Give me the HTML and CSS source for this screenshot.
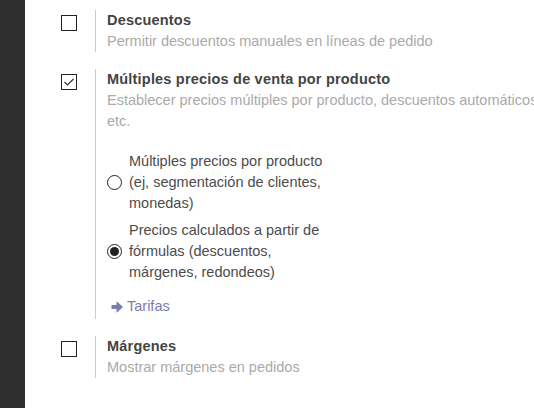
FILE: index.html
```html
<!DOCTYPE html>
<html lang="es">
<head>
<meta charset="utf-8">
<link rel="stylesheet" href="styles.css">
</head>
<body>
<div class="app">
  <aside class="sidebar"></aside>
  <main class="settings">
    <section class="setting">
      <div class="setting-check"><span class="checkbox"></span></div>
      <div class="setting-body">
        <div class="setting-title">Descuentos</div>
        <div class="setting-desc">Permitir descuentos manuales en líneas de pedido</div>
      </div>
    </section>

    <section class="setting">
      <div class="setting-check">
        <span class="checkbox checked">
          <svg width="12" height="10" viewBox="0 0 12 10"><path d="M1.5 5 L4.5 8 L10.5 2" fill="none" stroke="#333" stroke-width="1.2"/></svg>
        </span>
      </div>
      <div class="setting-body">
        <div class="setting-title">Múltiples precios de venta por producto</div>
        <div class="setting-desc wide">Establecer precios múltiples por producto, descuentos automáticos, etc.</div>
        <div class="options">
          <label class="option">
            <span class="radio"></span>
            <span class="option-text">Múltiples precios por producto (ej, segmentación de clientes, monedas)</span>
          </label>
          <label class="option">
            <span class="radio selected"></span>
            <span class="option-text">Precios calculados a partir de fórmulas (descuentos, márgenes, redondeos)</span>
          </label>
        </div>
        <a class="link" href="#">
          <svg width="12" height="12" viewBox="0 0 12 12"><path d="M0.5 4 H5.5 V1 Q5.5 0.3 6.2 0.8 L11.5 5.5 Q12 6 11.5 6.5 L6.2 11.2 Q5.5 11.7 5.5 11 V8 H0.5 Z" fill="#7c7bad"/></svg>
          Tarifas
        </a>
      </div>
    </section>

    <section class="setting">
      <div class="setting-check"><span class="checkbox"></span></div>
      <div class="setting-body">
        <div class="setting-title">Márgenes</div>
        <div class="setting-desc">Mostrar márgenes en pedidos</div>
      </div>
    </section>
  </main>
</div>
</body>
</html>
```
FILE: styles.css
```css
html, body {
  margin: 0;
  padding: 0;
  background: #fff;
  overflow: hidden;
}
body {
  font-family: "Liberation Sans", Arial, sans-serif;
  font-size: 14.5px;
  line-height: 21px;
  color: #4c4c4c;
}
.app {
  display: flex;
  min-height: 408px;
}
.sidebar {
  width: 25px;
  flex: none;
  background: #2f2f2f;
}
.settings {
  flex: none;
  width: 600px;
  padding-top: 10px;
  display: flex;
  flex-direction: column;
  gap: 17px;
}
.setting {
  display: flex;
}
.setting-check {
  width: 70px;
  flex: none;
  display: flex;
  justify-content: flex-end;
  padding-right: 18px;
  box-sizing: border-box;
  padding-top: 5px;
}
.checkbox {
  width: 16px;
  height: 16px;
  box-sizing: border-box;
  border: 1px solid #222;
  display: flex;
  align-items: center;
  justify-content: center;
}
.setting-body {
  border-left: 1px solid #ccc;
  padding-left: 11px;
  width: 500px;
}
.setting-title {
  font-weight: bold;
  letter-spacing: 0.2px;
  color: #444;
}
.setting-desc {
  color: #aaa;
}
.setting-desc.wide {
  width: 455px;
}
.options {
  margin-top: 19px;
  display: flex;
  flex-direction: column;
  gap: 6px;
}
.option {
  display: flex;
  align-items: center;
  gap: 7px;
  color: #4c4c4c;
}
.option-text {
  width: 205px;
}
.radio {
  width: 15px;
  height: 15px;
  box-sizing: border-box;
  border: 1px solid #222;
  border-radius: 50%;
  flex: none;
  display: flex;
  align-items: center;
  justify-content: center;
}
.radio.selected::after {
  content: "";
  width: 9px;
  height: 9px;
  border-radius: 50%;
  background: #222;
}
.link {
  display: inline-flex;
  align-items: center;
  gap: 4px;
  margin-top: 13px;
  margin-left: 4px;
  color: #7c7bad;
  text-decoration: none;
}
```
